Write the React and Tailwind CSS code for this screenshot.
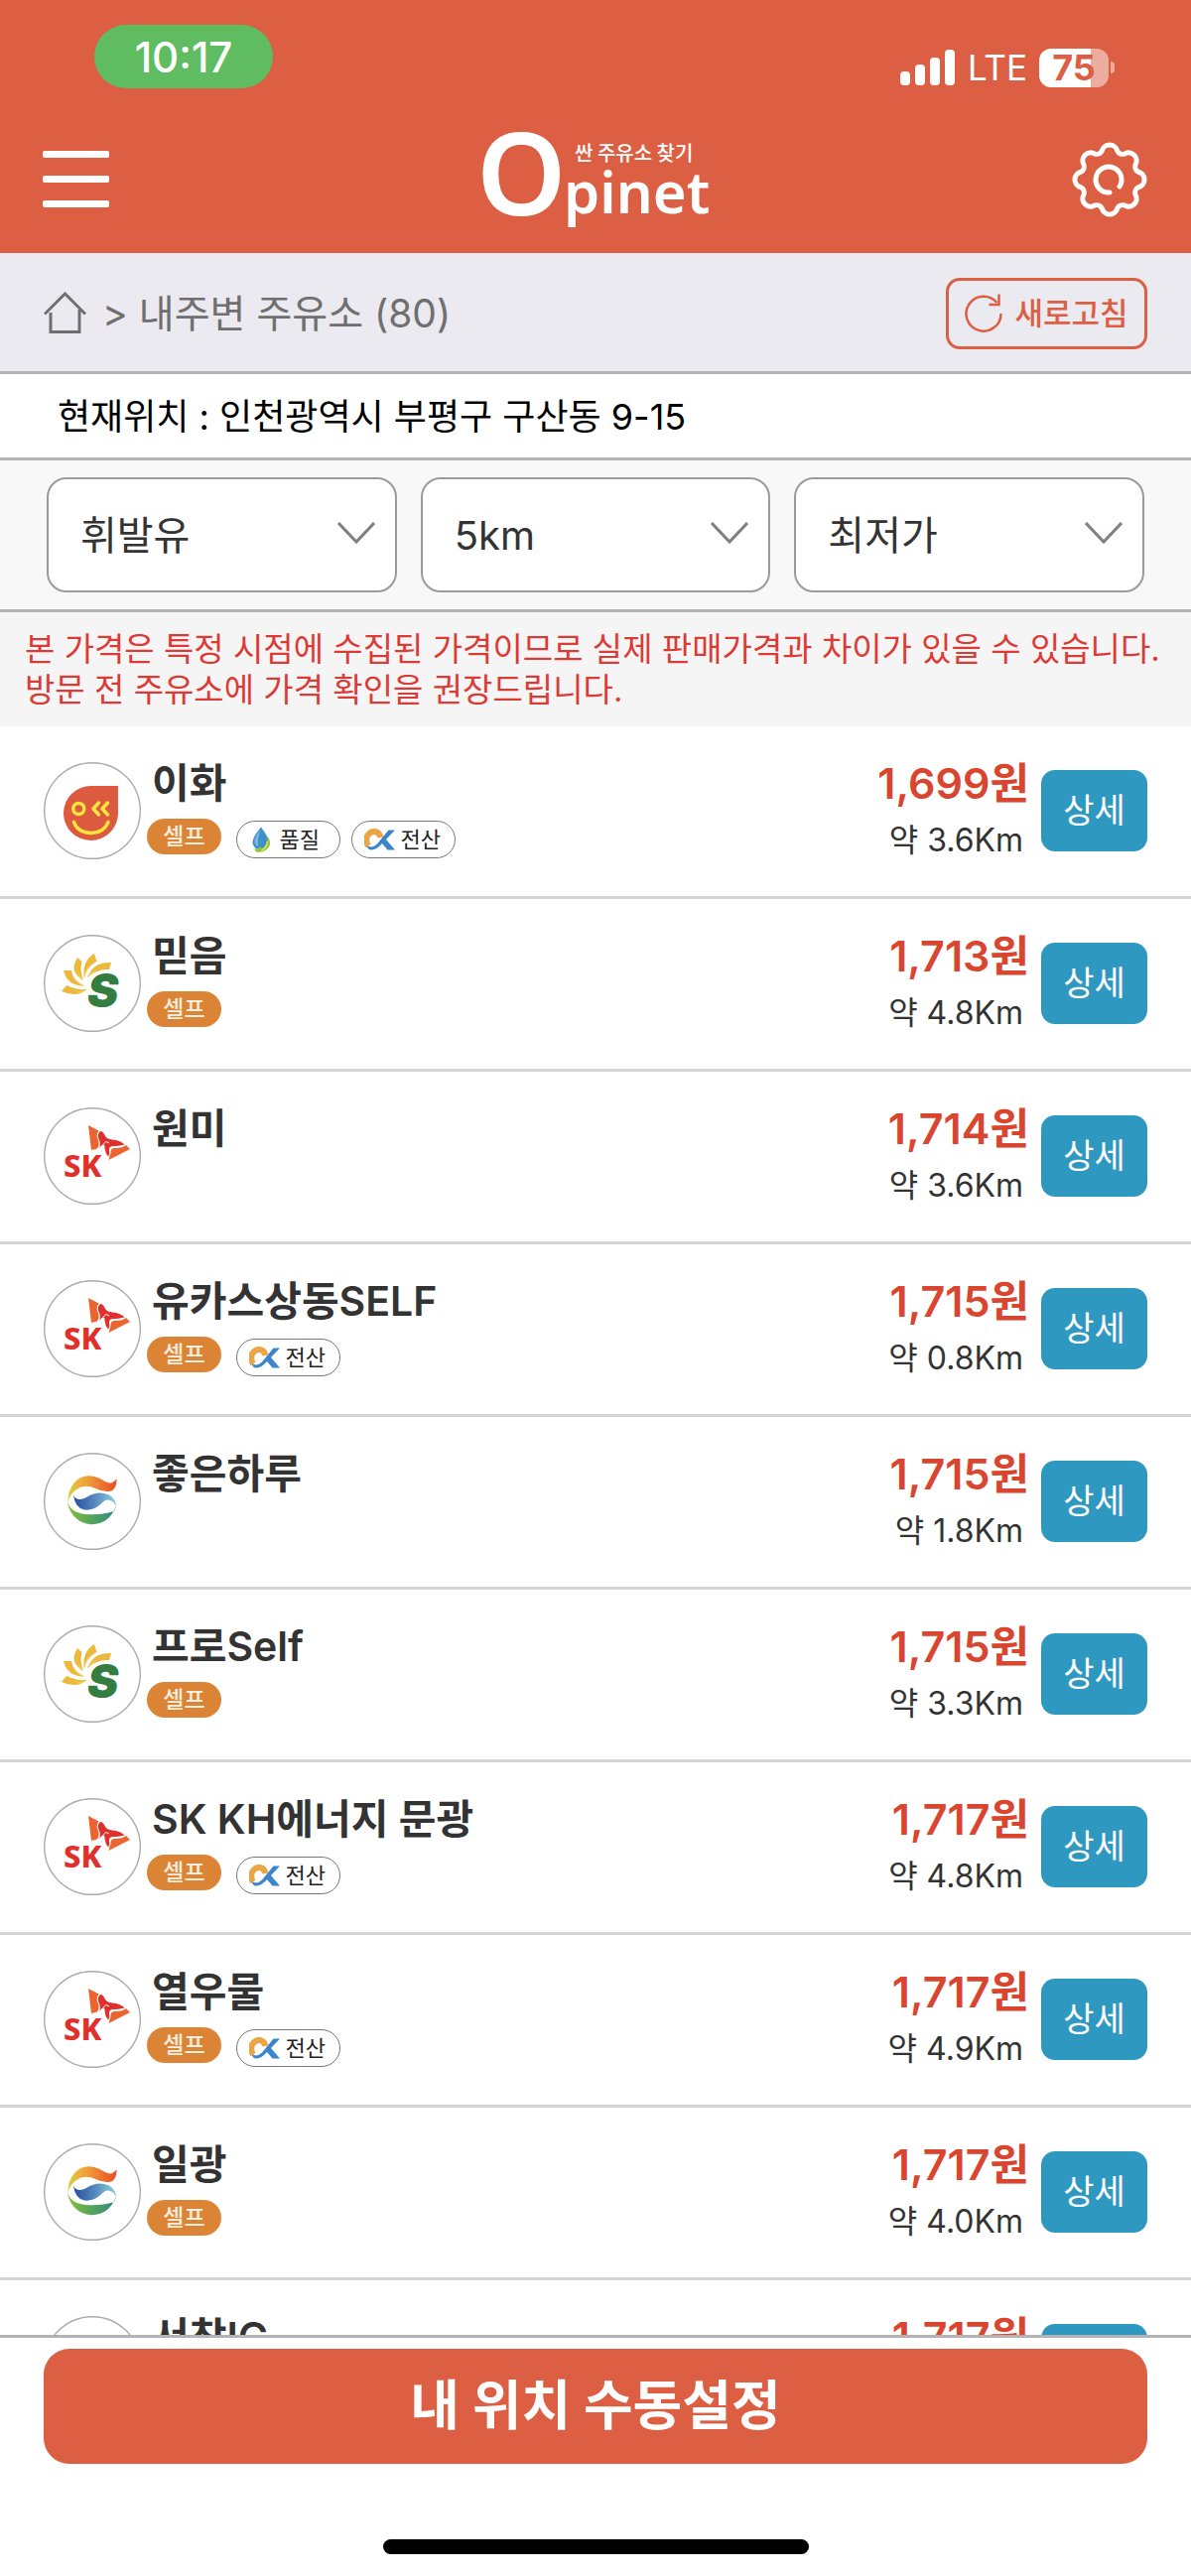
import React from "react";

const STATIONS = [
  { brand: "alddle", name: "이화", price: "1,699", distance: "3.6", tags: ["self", "quality", "digital"] },
  { brand: "soil", name: "믿음", price: "1,713", distance: "4.8", tags: ["self"] },
  { brand: "sk", name: "원미", price: "1,714", distance: "3.6", tags: [] },
  { brand: "sk", name: "유카스상동SELF", price: "1,715", distance: "0.8", tags: ["self", "digital"] },
  { brand: "gs", name: "좋은하루", price: "1,715", distance: "1.8", tags: [] },
  { brand: "soil", name: "프로Self", price: "1,715", distance: "3.3", tags: ["self"] },
  { brand: "sk", name: "SK KH에너지 문광", price: "1,717", distance: "4.8", tags: ["self", "digital"] },
  { brand: "sk", name: "열우물", price: "1,717", distance: "4.9", tags: ["self", "digital"] },
  { brand: "gs", name: "일광", price: "1,717", distance: "4.0", tags: ["self"] },
  { brand: "soil", name: "서창IC", price: "1,717", distance: "4.6", tags: ["self"] },
];

// Eight rounded lobes joined by small concave fillets.
const gearPoint = (deg) => {
  const a = (deg * Math.PI) / 180;
  return `${(40 + 30 * Math.cos(a)).toFixed(2)} ${(40 + 30 * Math.sin(a)).toFixed(2)}`;
};
const GEAR_PATH =
  `M${gearPoint(-15)}` +
  Array.from({ length: 8 }, (_, i) => `A8 8 0 0 1 ${gearPoint(i * 45 + 15)}A6 6 0 0 0 ${gearPoint(i * 45 + 30)}`).join("") +
  "Z";

function GearIcon() {
  return (
    <svg viewBox="0 0 80 80" className="size-20" fill="none" stroke="white" strokeWidth="5" strokeLinecap="round" strokeLinejoin="round" aria-hidden="true">
      <path d={GEAR_PATH} />
      <path d="M40 53A13 13 0 1 1 50 47" />
    </svg>
  );
}

function OpinetLogo() {
  return (
    <svg viewBox="0 0 234 104" className="h-[104px] w-[234px] overflow-visible" fill="white" role="img" aria-label="싼 주유소 찾기 Opinet">
      <text x="-4" y="88" fontFamily="'Noto Sans', sans-serif" fontWeight="600" fontSize="115">O</text>
      <text x="95" y="33" fontFamily="'Noto Sans CJK KR', sans-serif" fontWeight="500" fontSize="20">싼 주유소 찾기</text>
      <text x="84" y="86" fontFamily="'Noto Sans', sans-serif" fontWeight="600" fontSize="58">pinet</text>
    </svg>
  );
}

function StatusBar() {
  return (
    <div className="flex items-start justify-between pt-[25px] pr-[77px] pl-[95px]">
      <div className="flex h-16 w-[180px] items-center justify-center rounded-[32px] bg-[#5fbc60] text-[42px] font-medium text-white">10:17</div>
      <div className="flex items-center gap-3 pt-[23px]">
        <svg viewBox="0 0 56 36" className="h-9 w-14" fill="white" aria-label="신호" role="img">
          <rect x="0" y="22" width="10" height="14" rx="4" />
          <rect x="15" y="15" width="10" height="21" rx="4" />
          <rect x="30" y="8" width="10" height="28" rx="4" />
          <rect x="45" y="0" width="10" height="36" rx="4" />
        </svg>
        <span className="text-[35px] leading-10 text-white">LTE</span>
        <div className="flex items-center gap-[2px]">
          <div className="flex h-[39px] w-[70px] items-center justify-center rounded-xl bg-[linear-gradient(to_right,white_75%,#edad9e_75%)] text-[36px] leading-none font-bold text-[#dc5f43]">75</div>
          <div className="h-3 w-1 rounded-r-full bg-[#edad9e]" />
        </div>
      </div>
    </div>
  );
}

function Header() {
  return (
    <header className="flex h-[255px] shrink-0 flex-col bg-[#dc5f43]">
      <StatusBar />
      <div className="mt-auto flex h-[149px] items-center justify-between pr-[42px] pl-[43px]">
        <button aria-label="메뉴" className="flex w-20 flex-col gap-[18px]">
          <span className="h-[7px] w-[67px] rounded-xs bg-white" />
          <span className="h-[7px] w-[67px] rounded-xs bg-white" />
          <span className="h-[7px] w-[67px] rounded-xs bg-white" />
        </button>
        <OpinetLogo />
        <button aria-label="설정"><GearIcon /></button>
      </div>
    </header>
  );
}

function Breadcrumb() {
  return (
    <nav className="flex h-[122px] shrink-0 items-center justify-between border-b-3 border-[#b3b3b6] bg-[#ebeaf0] px-11 pt-[2px] text-[#6f6f70]">
      <div className="flex items-center gap-4">
        <a href="#home" aria-label="홈">
          <svg viewBox="0 0 43 43" className="size-[43px]" fill="none" stroke="#6f6f70" strokeWidth="3" aria-hidden="true">
            <path d="M1 22.5L21.5 2L42 22.5" />
            <path d="M7 21V40.500H36V18" />
          </svg>
        </a>
        <span className="text-[39px] leading-[48px]">&gt; 내주변 주유소 (80)</span>
      </div>
      <button className="flex h-[72px] w-[203px] items-center justify-center gap-3 rounded-[14px] border-3 border-[#dc5f43] text-[31px] leading-10 font-medium text-[#dc5f43]">
        <svg viewBox="0 0 38 40" className="h-10 w-[38px]" fill="none" stroke="#dc5f43" strokeWidth="2.500" aria-hidden="true">
          <path d="M36.500 20A17.500 17.500 0 1 1 32.500 9" />
          <path d="M34.500 0.500V11H24.500" />
        </svg>
        새로고침
      </button>
    </nav>
  );
}

function Dropdown({ label, options }) {
  return (
    <div className="relative flex-1">
      <select aria-label={label} className="block h-[116px] w-full appearance-none rounded-[20px] border-2 border-[#9b9b9b] bg-white pt-[2px] pr-16 pl-8 text-[40px] text-[#333]">
        {options.map((o) => (
          <option key={o}>{o}</option>
        ))}
      </select>
      <svg viewBox="0 0 38 23" className="pointer-events-none absolute top-[45px] right-[22px] h-[23px] w-[38px]" fill="none" stroke="#808080" strokeWidth="3" aria-hidden="true">
        <path d="M1 1L19 20L37 1" />
      </svg>
    </div>
  );
}

function AlddleLogo() {
  return (
    <g fill="none" stroke="#ffe53d" strokeWidth="3.500" strokeLinecap="round" strokeLinejoin="round">
      <path d="M48 24H75V51.500A27.500 27.500 0 1 1 48 24Z" fill="#dc5b3f" stroke="none" />
      <circle cx="35.300" cy="47" r="5.500" />
      <path d="M55.500 41L50 47L55.500 53" />
      <path d="M64.500 41L59 47L64.500 53" />
      <path d="M30.500 60.500Q34 71 48 71.500Q61 71 65 60.500" />
    </g>
  );
}

function SoilLogo() {
  return (
    <g>
      <g fill="#edb93c">
        <path d="M18 57L23 51Q33 56 44 55Q33 64 18 57Z" />
        <path d="M20 36L28 36Q29 46 41 51.500Q24 52 20 36Z" />
        <path d="M34 23L38.500 27Q36 36 40 46Q25 37 34 23Z" />
        <path d="M51 19L53.500 27Q43 32 41 44Q38 27 51 19Z" />
        <path d="M68 28L66 35Q54 34 44 43Q50 27 68 28Z" />
      </g>
      <g fill="#f4d644">
        <path d="M30 57Q37 58 44 55Q37 60 30 57Z" />
        <path d="M30 43Q34 49 41 51.500Q34 51 30 43Z" />
        <path d="M35 36Q36 42 40 46Q35 43 35 36Z" />
        <path d="M45 33Q41 38 41 44Q40 36 45 33Z" />
        <path d="M54 35Q48 38 44 43Q47 36 54 35Z" />
      </g>
      <text x="44" y="73" fill="#337d40" stroke="white" strokeWidth="2" paintOrder="stroke" fontFamily="Inter, sans-serif" fontStyle="italic" fontWeight="900" fontSize="47">S</text>
    </g>
  );
}

function SkLogo() {
  return (
    <g>
      <path d="M45 18L55.500 23.500Q52.500 28 54.500 32Q57 37 54 41.500L48 43Z" fill="#ec6530" />
      <path d="M57 24Q60 24 62 29Q64 32 69 32.500Q77 33 81.500 37.500Q74 39 70 39Q66 39 66 43Q67 47 65 49.500Q62 46 61.500 41Q62 38 60 37Q57 39 56 41.500Q58 36 55.500 32Q53.500 27 57 24Z" fill="#df302c" />
      <path d="M66 36Q62 33 60.500 37" fill="none" stroke="white" strokeWidth="1" />
      <path d="M83 38L87 42L65.500 53Q66.500 49 67.500 46Q67 41.500 71 41Q79 41.500 83 38Z" fill="#ec6530" />
      <text x="20" y="70" fill="#df302c" fontFamily="'Noto Sans', sans-serif" fontWeight="800" fontSize="31">SK</text>
    </g>
  );
}

function GsLogo() {
  return (
    <g>
      <defs>
        <linearGradient id="gsTop"><stop offset="0" stopColor="#d9cf3c" /><stop offset="0.350" stopColor="#f0a33c" /><stop offset="1" stopColor="#e94e25" /></linearGradient>
        <linearGradient id="gsMid"><stop offset="0" stopColor="#2450a0" /><stop offset="0.500" stopColor="#5689be" /><stop offset="1" stopColor="#8fd3dc" /></linearGradient>
        <linearGradient id="gsLow"><stop offset="0" stopColor="#86c13e" /><stop offset="0.500" stopColor="#52a45a" /><stop offset="1" stopColor="#348a86" /></linearGradient>
      </defs>
      <path d="M24.500 50Q24 38 31 30Q39 21 51 24Q56 25 62 29Q69 33 73.500 26Q74 38 66 39Q59 39.500 52 36Q42 31 33 37Q26 42 24.500 50Z" fill="url(#gsTop)" />
      <path d="M30 43Q34 50 43 45Q52 39 61 41Q72 43 73.500 54Q68 46 62 48Q59 50 56 53Q49 58.500 41 57.500Q32 56 30 43Z" fill="url(#gsMid)" />
      <path d="M24 47Q25 60 42 62Q58 63 71 59Q73 55 73.500 49A24.800 25.500 0 0 1 24 47Z" fill="url(#gsLow)" />
    </g>
  );
}

const LOGOS = {
  alddle: { label: "알뜰주유소", Art: AlddleLogo },
  soil: { label: "S-OIL", Art: SoilLogo },
  sk: { label: "SK", Art: SkLogo },
  gs: { label: "GS칼텍스", Art: GsLogo },
};

function BrandLogo({ brand }) {
  const { label, Art } = LOGOS[brand];
  return (
    <svg viewBox="0 0 98 98" className="size-[98px] shrink-0" role="img" aria-label={label}>
      <circle cx="49" cy="49" r="48.300" fill="white" stroke="#acacac" strokeWidth="1.400" />
      <Art />
    </svg>
  );
}

function DropIcon() {
  return (
    <svg viewBox="0 0 19 26" className="h-[26px] w-[19px]" aria-hidden="true">
      <path d="M9 0.500Q16 10 17 15Q17 23 9 24Q1 23 0.500 15.500Q1 10 9 0.500Z" fill="#3f8fcb" />
      <path d="M8.500 3Q3 10 2.500 15Q3 19 6 20Q5 12 8.500 3Z" fill="#7db9e2" />
      <path d="M16 10.500Q20 16 16.500 21Q12 27 4 25.500L2 22.500Q6 23 8 20.500L10.500 22Q15 18 16 10.500Z" fill="#8cc63f" />
      <path d="M15.500 15Q15 21 9.500 24" fill="none" stroke="#e3e35a" strokeWidth="1.500" />
    </svg>
  );
}

function AlphaIcon() {
  return (
    <svg viewBox="0 0 31 22" className="h-[22px] w-[31px]" fill="none" aria-hidden="true">
      <path d="M4 17.500Q1 13 3 7.500Q6 2.500 11 3Q15.500 4 16.500 9" stroke="#eca544" strokeWidth="6" />
      <path d="M2.500 17Q8 20.500 13 15.500L24.500 1.500H31L22 11L31 21.500H23.500L18 15Q12 22 6.500 21.500Q3.500 21 2.500 17Z" fill="#3b86cb" />
      <path d="M9.500 6.500Q13 10 12 13Q9.500 16 7 12.500Q7.500 9 9.500 6.500Z" fill="white" />
    </svg>
  );
}

function Tag({ kind }) {
  if (kind === "self") {
    return (
      <span className="mr-1 flex h-9 w-[75px] items-center justify-center rounded-full bg-[#dc8436] text-[23px] leading-none font-medium text-[#fcefdf]">셀프</span>
    );
  }
  const quality = kind === "quality";
  return (
    <span className={`mt-[2px] flex h-[38px] w-[105px] items-center justify-end rounded-full border border-[#777] bg-white text-[22px] leading-none text-[#222] ${quality ? "gap-[9px] pr-5" : "gap-[6px] pr-[14px]"}`}>
      {quality ? <DropIcon /> : <AlphaIcon />}
      {quality ? "품질" : "전산"}
    </span>
  );
}

function StationRow({ station }) {
  return (
    <li className="flex h-[174px] items-start border-b-3 border-[#d4d4d9] px-11 pt-9">
      <BrandLogo brand={station.brand} />
      <div className="min-w-0 flex-1 pl-[6px]">
        <h2 className="pl-[5px] text-[41px] leading-[43px] font-semibold text-[#333]">{station.name}</h2>
        <div className="mt-[14px] flex items-start gap-[11px]">
          {station.tags.map((t) => (
            <Tag key={t} kind={t} />
          ))}
        </div>
      </div>
      <div className="flex flex-col items-end pr-3">
        <strong className="text-[43px] leading-[43px] font-semibold text-[#d9452f]">{station.price}원</strong>
        <span className="mt-[18px] pr-[6px] text-[32px] leading-9 text-[#333]">약 {station.distance}Km</span>
      </div>
      <button className="mt-2 h-[82px] w-[107px] shrink-0 rounded-[14px] bg-[#2f98c0] text-[34px] leading-10 text-white">상세</button>
    </li>
  );
}

export default function App() {
  return (
    <div className="flex h-screen flex-col overflow-hidden bg-white font-[Inter,'Noto_Sans_CJK_KR',sans-serif]">
      <Header />
      <Breadcrumb />
      <p className="flex h-[87px] shrink-0 items-center border-b-3 border-[#b3b3b3] px-[58px] pt-[2px] text-[36px] leading-[48px] text-black">
        현재위치 : 인천광역시 부평구 구산동 9-15
      </p>
      <form className="flex h-[153px] shrink-0 items-center gap-6 border-b-3 border-[#b3b3b3] bg-[#f8f8f8] px-[47px]">
        <Dropdown label="유종" options={["휘발유", "경유", "LPG"]} />
        <Dropdown label="반경" options={["5km", "3km", "1km"]} />
        <Dropdown label="정렬" options={["최저가", "거리순"]} />
      </form>
      <p className="h-[115px] shrink-0 bg-[#f5f5f5] px-[25px] pt-[17px] text-[33px] leading-[41px] text-[#dc3a35]">
        본 가격은 특정 시점에 수집된 가격이므로 실제 판매가격과 차이가 있을 수 있습니다.
        <br />
        방문 전 주유소에 가격 확인을 권장드립니다.
      </p>
      <main className="min-h-0 flex-1 overflow-hidden">
        <ul>
          {STATIONS.map((s) => (
            <StationRow key={s.name} station={s} />
          ))}
        </ul>
      </main>
      <footer className="flex shrink-0 flex-col items-center border-t-3 border-[#b3b3b3] bg-white px-11 pt-[11px] pb-[22px]">
        <button className="h-[116px] w-full rounded-[26px] bg-[#dc5f43] text-[54px] leading-[64px] font-bold text-white">내 위치 수동설정</button>
        <div className="mt-[76px] h-[15px] w-[429px] rounded-full bg-black" />
      </footer>
    </div>
  );
}
